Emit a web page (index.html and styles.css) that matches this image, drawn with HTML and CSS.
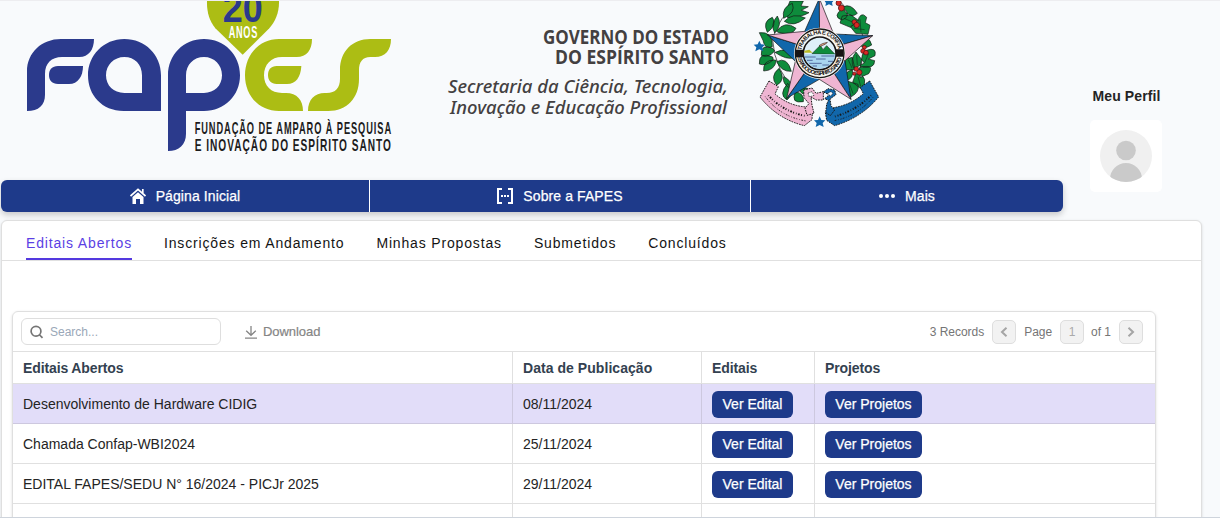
FILE: index.html
```html
<!DOCTYPE html>
<html lang="pt-BR">
<head>
<meta charset="utf-8">
<title>FAPES</title>
<link rel="stylesheet" href="styles.css">
</head>
<body>
<div class="viewport">
  <header class="header">
    <div class="brand">
      <svg class="logo-fapes" width="400" height="165" viewBox="0 0 1200 495">
        <path fill="#acbd14" d="M621 3H837C838 36 827 63 808 85L728 164L646 85C628 63 620 36 621 3Z"/>
        <text x="668" y="66" font-size="124" font-weight="700" fill="#2b3a8c" textLength="120" lengthAdjust="spacingAndGlyphs">20</text>
        <text x="686" y="113" font-size="52" font-weight="700" fill="#fff" letter-spacing="4" textLength="88" lengthAdjust="spacingAndGlyphs">ANOS</text>
        <g fill="#2b3a8c">
          <path d="M81 333V214C81 158 125 117 183 117H282C282 149 266 171 238 171H186C154 171 135 190 135 222V284C135 315 116 333 81 333Z"/>
          <path d="M174 198H249C249 229 234 252 207 252H174C156 252 147 241 147 225S156 198 174 198Z"/>
          <path fill-rule="evenodd" d="M483 333H371C306 333 264 286 264 226S311 117 373 117S483 164 483 226ZM426 279V226C426 193 404 171 373 171S318 195 318 226S341 279 373 279Z"/>
          <path fill-rule="evenodd" d="M504 453V226C504 164 551 117 612 117S720 164 720 226S673 333 612 333H558V401C558 434 537 453 504 453ZM558 279H612C643 279 666 257 666 226S643 171 612 171S558 194 558 226Z"/>
        </g>
        <g fill="#acbd14">
          <path d="M936 117C936 150 920 171 890 171H846C813 171 792 194 792 226S813 279 846 279H858C891 279 909 300 909 333H837C776 333 735 286 735 226S776 117 837 117Z"/>
          <path d="M830 198H904C902 231 888 252 861 252H830C813 252 804 241 804 225S813 198 830 198Z"/>
          <path d="M924 333C924 299 944 279 974 279H980C1007 279 1020 263 1020 236V210C1020 154 1057 117 1111 117H1173C1173 150 1156 171 1125 171H1111C1087 171 1077 187 1077 211V237C1077 295 1040 333 985 333Z"/>
        </g>
        <g class="logo-caption">
          <text x="584" y="401" textLength="592" lengthAdjust="spacingAndGlyphs">FUNDAÇÃO DE AMPARO À PESQUISA</text>
          <text x="584" y="454" textLength="592" lengthAdjust="spacingAndGlyphs">E INOVAÇÃO DO ESPÍRITO SANTO</text>
        </g>
      </svg>
      <svg class="logo-gov" width="310" height="135" viewBox="0 0 310 135" fill="#434041">
        <g class="gov-title">
          <text x="113" y="44" textLength="186" lengthAdjust="spacingAndGlyphs">GOVERNO DO ESTADO</text>
          <text x="125" y="64" textLength="174" lengthAdjust="spacingAndGlyphs">DO ESPÍRITO SANTO</text>
        </g>
        <g class="gov-sub">
          <text x="18" y="93" textLength="280" lengthAdjust="spacingAndGlyphs">Secretaria da Ciência, Tecnologia,</text>
          <text x="20" y="114" textLength="277" lengthAdjust="spacingAndGlyphs">Inovação e Educação Profissional</text>
        </g>
      </svg>
      <svg class="emblem" width="150" height="135" viewBox="0 0 450 405" stroke-linejoin="round">
        <g fill="#0e8c3c" stroke="#151515" stroke-width="2">
          <path d="M188 2Q110 50 98 120Q100 205 185 302" fill="none"/>
          <path d="M150 3H190L183 18L205 20L184 31L207 38Q184 52 143 53L137 42L151 32L141 25Z"/>
          <path d="M131 55Q124 22 157 10Q168 39 131 55ZM133 64Q160 84 196 54Q158 36 133 64ZM82 97Q66 64 97 52Q113 75 82 97ZM104 99Q90 72 112 48Q128 74 104 99ZM109 94Q135 59 168 85Q158 107 117 98Z"/>
          <path d="M97 140Q75 151 69 121L58 98Q99 94 97 140ZM98 145Q62 129 64 166Q85 176 104 153ZM98 171Q56 153 58 192Q77 200 100 179ZM104 180Q68 180 71 213Q104 212 109 181ZM105 157Q146 138 163 173Q139 181 105 157ZM110 185Q142 168 154 214Q125 216 110 185ZM117 205Q88 229 110 256Q140 239 117 205ZM131 230Q125 255 158 268Q155 240 131 230ZM143 250Q114 284 141 300Q166 280 143 250ZM166 275Q151 312 190 305Q194 280 166 275ZM176 270Q205 250 220 288Q195 293 176 270Z"/>
          <path d="M300 4Q382 90 371 148Q360 245 323 287" fill="none"/>
          <path d="M309 21Q332 8 352 40Q337 55 317 37ZM310 23Q274 50 306 60Q337 49 310 23ZM333 45L307 48L300 69L331 82L355 61ZM352 68Q361 30 380 52L376 68L390 76L384 103L347 100L331 80ZM346 120Q388 101 395 135Q368 155 346 120ZM342 148Q318 130 315 104Q351 110 353 142ZM379 151Q411 140 405 167L385 177L404 182Q404 209 361 200L367 165ZM348 156Q328 180 342 206L373 189ZM337 172L316 178L313 210L345 209ZM358 203Q406 190 386 221L361 232ZM331 211Q305 224 316 242Q343 237 337 209ZM347 221L338 247L365 268Q388 233 355 222ZM324 244Q313 263 334 290Q360 276 354 253Z"/>
          <path fill="none" stroke-width="1.5" d="M342 85L374 89M360 58L363 97M386 160L374 188M350 165L352 195M325 180L336 204M354 230L362 258M329 253L339 281M312 55L340 67"/>
        </g>
        <g fill="#d92823" stroke="#421015" stroke-width="2">
          <circle cx="296" cy="9" r="8"/><circle cx="304" cy="24" r="9"/><circle cx="343" cy="66" r="7"/><circle cx="350" cy="75" r="8"/><circle cx="373" cy="142" r="6"/><circle cx="369" cy="153" r="7"/><circle cx="378" cy="158" r="7"/><circle cx="349" cy="207" r="7"/><circle cx="358" cy="217" r="8"/><circle cx="343" cy="221" r="5"/>
        </g>
        <g stroke="#111" stroke-width="2">
          <g fill="#1167ab">
            <path d="M238 -5L194 94L239 154ZM83 105L239 154L166 184ZM140 295L239 154L238 238ZM333 298L239 154L315 182ZM398 107L239 154L281 102Z"/>
          </g>
          <g fill="#efb5d2">
            <path d="M238 -5L281 102L239 154ZM83 105L194 94L239 154ZM140 295L166 184L239 154ZM333 298L238 238L239 154ZM398 107L315 182L239 154Z"/>
          </g>
        </g>
        <g>
          <circle cx="239" cy="160" r="77" fill="#f7f7f1"/>
          <circle cx="239" cy="160" r="73" fill="none" stroke="#181515" stroke-width="4"/>
          <circle cx="239" cy="160" r="49" fill="#dff0fa" stroke="#181515" stroke-width="5"/>
          <path fill="#b9bb26" d="M193 152L208 149L218 158H193Z"/>
          <path fill="#0e8c3c" stroke="#163b22" stroke-width="2" d="M216 161L241 136L249 149L260 137L285 163Z"/>
          <path fill="#efaa86" stroke="#3a2b27" stroke-width="2" d="M237 137L247 131L262 127L257 132L241 139Z"/>
          <path fill="#a9d5ef" d="M192 163H286Q285 198 239 207Q199 202 192 163Z"/>
          <path stroke="#283677" stroke-width="2" fill="none" d="M194 171H227M244 168H283M201 181H218M228 177H257M264 184H279M208 190H245M218 198H231M247 195H267"/>
          <path fill="#171414" d="M167 149H190V172H167ZM288 148H311V170H288Z"/>
          <path id="motto-top" d="M184 151A56 56 0 0 1 295 151" fill="none"/>
          <path id="motto-bottom" d="M172 169A68 68 0 0 0 306 169" fill="none"/>
          <g fill="#171414" class="motto">
            <text><textPath href="#motto-top" textLength="158">TRABALHA E CONFIA</textPath></text>
            <text><textPath href="#motto-bottom" textLength="185">ESTADO DO ESPÍRITO SANTO</textPath></text>
          </g>
        </g>
        <g stroke="#171717" stroke-width="3" stroke-dasharray="5 3">
          <g fill="#efb5d2">
            <path d="M87 243L115 260L105 282Q147 318 200 321L217 335L216 359L193 377Q112 357 60 291Z"/>
            <path d="M191 270L216 264L228 280L250 275V300H229L213 291L216 316L222 340L201 346L195 324L207 311L192 293Z"/>
          </g>
          <g fill="#1167ab">
            <path d="M389 243L361 262L370 281Q332 315 280 323L256 337L260 361L284 377Q365 353 416 291Z"/>
            <path d="M250 276L264 266L284 270L288 284L270 297L273 317L284 330L271 347L257 337L260 313L265 301L254 296L268 284Z"/>
          </g>
          <path fill="#f8fafc" stroke-width="2" d="M204 279L216 275L222 286L208 291ZM262 281L272 275L279 280L272 288Z"/>
        </g>
        <g fill="none" stroke="#171717" stroke-width="6" stroke-dasharray="2 5 5 4 3 6">
          <path d="M85 286Q128 334 197 348M393 286Q350 331 283 350"/>
          <path stroke-width="3" d="M76 290Q120 350 199 363M399 292Q350 350 282 362"/>
        </g>
        <g fill="#1167ab">
          <path id="small-star" d="M58 122L63 133L75 134L67 142L70 154L58 148L46 154L49 142L41 134L53 133Z"/>
          <use href="#small-star" x="181" y="227"/>
          <path d="M254 3H280L276 8L278 18L267 13L256 18L258 9Z"/>
        </g>
      </svg>
    </div>
    <aside class="profile">
      <span>Meu Perfil</span>
      <div class="avatar">
        <svg width="52" height="52" viewBox="0 0 52 52"><defs><clipPath id="avatar-clip"><circle cx="26" cy="26" r="26"/></clipPath></defs><circle cx="26" cy="26" r="26" fill="#f0f0f0"/><g fill="#cacaca" clip-path="url(#avatar-clip)"><circle cx="26" cy="20.5" r="9.8"/><ellipse cx="26" cy="49" rx="16" ry="16"/></g></svg>
      </div>
    </aside>
    <nav class="nav">
      <a><svg width="16" height="16" viewBox="0 0 16 16"><path fill="#fff" d="M2.5 9L8 4.2L13.5 9V16H10V11H6V16H2.5Z"/><path fill="none" stroke="#fff" stroke-width="1.7" d="M.5 8L8 1.3L15.5 8M12.8 1V5"/></svg><span>Página Inicial</span></a>
      <a><svg width="16" height="16" viewBox="0 0 16 16"><path fill="none" stroke="#fff" stroke-width="2" d="M5 1H1V15H5M11 1H15V15H11"/><path fill="#fff" d="M4 7H6V9H4ZM7 7H9V9H7ZM10 7H12V9H10Z"/></svg><span>Sobre a FAPES</span></a>
      <a><svg width="16" height="16" viewBox="0 0 16 16" fill="#fff"><circle cx="2" cy="8" r="2"/><circle cx="8" cy="8" r="2"/><circle cx="14" cy="8" r="2"/></svg><span>Mais</span></a>
    </nav>
  </header>
  <main class="panel">
    <div class="tabs">
      <a class="active">Editais Abertos</a><a>Inscrições em Andamento</a><a>Minhas Propostas</a><a>Submetidos</a><a>Concluídos</a>
    </div>
    <section class="grid">
      <div class="toolbar">
        <div class="search"><svg width="14" height="14" viewBox="0 0 14 14" fill="none" stroke="#757575" stroke-width="1.7"><circle cx="6" cy="6.3" r="4.9"/><path d="M9.2 9.5L12.5 12.8"/></svg><span>Search...</span></div>
        <div class="download"><svg width="12" height="13" viewBox="0 0 12 13" fill="none" stroke="#858585" stroke-width="1.3"><path d="M6 0V9M1.2 4.7L6 9.3L10.8 4.7M0 12.2H12"/></svg><span>Download</span></div>
        <div class="pager">
          <span class="records">3 Records</span>
          <b><svg width="8" height="10" viewBox="0 0 8 10"><path d="M6.5 .8L2 5L6.5 9.2"/></svg></b>
          <span class="page">Page</span><b>1</b><span class="total">of 1</span>
          <b><svg width="8" height="10" viewBox="0 0 8 10"><path d="M1.5 .8L6 5L1.5 9.2"/></svg></b>
        </div>
      </div>
      <table>
        <colgroup><col class="c-name"><col class="c-date"><col class="c-edital"><col></colgroup>
        <thead><tr><th>Editais Abertos</th><th class="wide">Data de Publicação</th><th>Editais</th><th>Projetos</th></tr></thead>
        <tbody>
          <tr class="selected"><td>Desenvolvimento de Hardware CIDIG</td><td>08/11/2024</td><td><button class="b-edital">Ver Edital</button></td><td><button class="b-projetos">Ver Projetos</button></td></tr>
          <tr><td>Chamada Confap-WBI2024</td><td>25/11/2024</td><td><button class="b-edital">Ver Edital</button></td><td><button class="b-projetos">Ver Projetos</button></td></tr>
          <tr><td>EDITAL FAPES/SEDU N° 16/2024 - PICJr 2025</td><td>29/11/2024</td><td><button class="b-edital">Ver Edital</button></td><td><button class="b-projetos">Ver Projetos</button></td></tr>
          <tr><td></td><td></td><td></td><td></td></tr>
        </tbody>
      </table>
    </section>
  </main>
</div>
</body>
</html>
```
FILE: styles.css
```css
* { box-sizing: border-box; }
body { margin: 0; background: #fff; font: 14px/20px "Liberation Sans", Arial, sans-serif; color: #242424; overflow: hidden; }
svg { display: block; flex: none; }
.viewport { height: 518px; overflow: hidden; background: #f8fafc; border-top: 1px solid #ededf0; border-bottom: 1px solid #ced4dc; }
.header { display: grid; grid-template: 179px 32px / 1063px 127px; height: 211px; }
.brand { display: flex; align-items: flex-start; margin-top: -1px; height: 179px; }
.logo-fapes { clip-path: inset(1px 0 0); }
.logo-fapes text { font-family: "Liberation Sans Narrow", "Liberation Sans", sans-serif; }
.logo-caption { font-size: 51px; font-weight: 700; fill: #1c1c1c; letter-spacing: 5px; }
.logo-gov { margin-left: 30px; }
.gov-title { font: 700 19px "Open Sans", sans-serif; }
.gov-sub { font: italic 500 18px "Noto Sans", sans-serif; }
.emblem { clip-path: inset(1px 0 0); }
.motto { font: 700 17px "Liberation Sans", sans-serif; }
.profile { display: flex; flex-direction: column; align-items: center; grid-row: 1 / 3; grid-column: 2; padding-top: 85px; font-weight: 700; }
.profile span { letter-spacing: .1px; }
.avatar { margin: 14px 1px 0 0; padding: 10px; width: 72px; height: 72px; border-radius: 5px; background: #fff; }
.nav { grid-row: 2; grid-column: 1; display: grid; grid-template-columns: 369px 381px 312px; margin-left: 1px; height: 32px; overflow: visible; border-radius: 6px; background: #1e3a8a; box-shadow: 0 3px 6px #0003; color: #fff; letter-spacing: .1px; -webkit-text-stroke: .25px #fff; }
.nav a { display: flex; align-items: center; justify-content: center; gap: 10px; }
.nav a:not(:last-child) { border-right: 1px solid #fff; }
.panel { position: relative; margin: 8px 18px 0 1px; height: 310px; border: 1px solid #dfdfdf; border-radius: 6px; background: #fff; box-shadow: 0 1px 3px #0002; }
.tabs { display: flex; gap: 32px; height: 40px; padding-left: 24px; border-bottom: 1px solid #e0e0e0; color: #141414; letter-spacing: .84px; }
.tabs a { height: 39px; padding-top: 12px; }
.tabs .active { color: #5b3fe4; border-bottom: 2px solid #5439df; }
.grid { margin: 50px 45px 0 10px; height: 250px; border: 1px solid #dfdfdf; border-radius: 6px; box-shadow: 0 1px 3px #0002; }
.toolbar { display: flex; align-items: center; height: 40px; padding: 0 12px 0 8px; border-bottom: 1px solid #e0e0e0; }
.search { display: flex; align-items: center; width: 200px; height: 27px; gap: 6px; padding-left: 8px; border: 1px solid #dedede; border-radius: 6px; color: #9aa8b8; font-size: 12px; }
.download { display: flex; align-items: center; gap: 6px; margin-left: 24px; padding-top: 1px; color: #858585; -webkit-text-stroke: .2px #858585; }
.download span { font-size: 13px; letter-spacing: -.05px; }
.pager { display: flex; align-items: center; margin-left: auto; color: #757575; font-size: 12px; letter-spacing: -.03px; }
.pager b { display: grid; place-items: center; width: 24px; height: 24px; border: 1px solid #dedede; border-radius: 5px; background: #f2f2f2; color: #aaa; font-weight: 400; }
.pager path { fill: none; stroke: #a5a5a5; stroke-width: 2; }
.records { margin-right: 8px; }
.page { margin: 0 8px; }
.total { margin: 0 8px 0 7px; }
table { width: 100%; border-spacing: 0; table-layout: fixed; }
.c-name { width: 500px; }
.c-date { width: 189px; }
.c-edital { width: 113px; }
th, td { padding: 0 10px; border-bottom: 1px solid #e0e0e0; border-right: 1px solid #e0e0e0; text-align: left; white-space: nowrap; }
th:last-child, td:last-child { border-right: 0; }
th { height: 32px; color: #334150; letter-spacing: -.12px; }
.wide { letter-spacing: .05px; }
td { height: 40px; }
.selected td { background: #e2ddf9; border-color: #cdc8df; }
button { display: block; height: 27px; margin-top: 1px; padding: 0; border: 0; border-radius: 6px; background: #1e3a8a; color: #fff; font: inherit; -webkit-text-stroke: .25px #fff; }
.b-edital { width: 81px; }
.b-projetos { width: 97px; }
```
